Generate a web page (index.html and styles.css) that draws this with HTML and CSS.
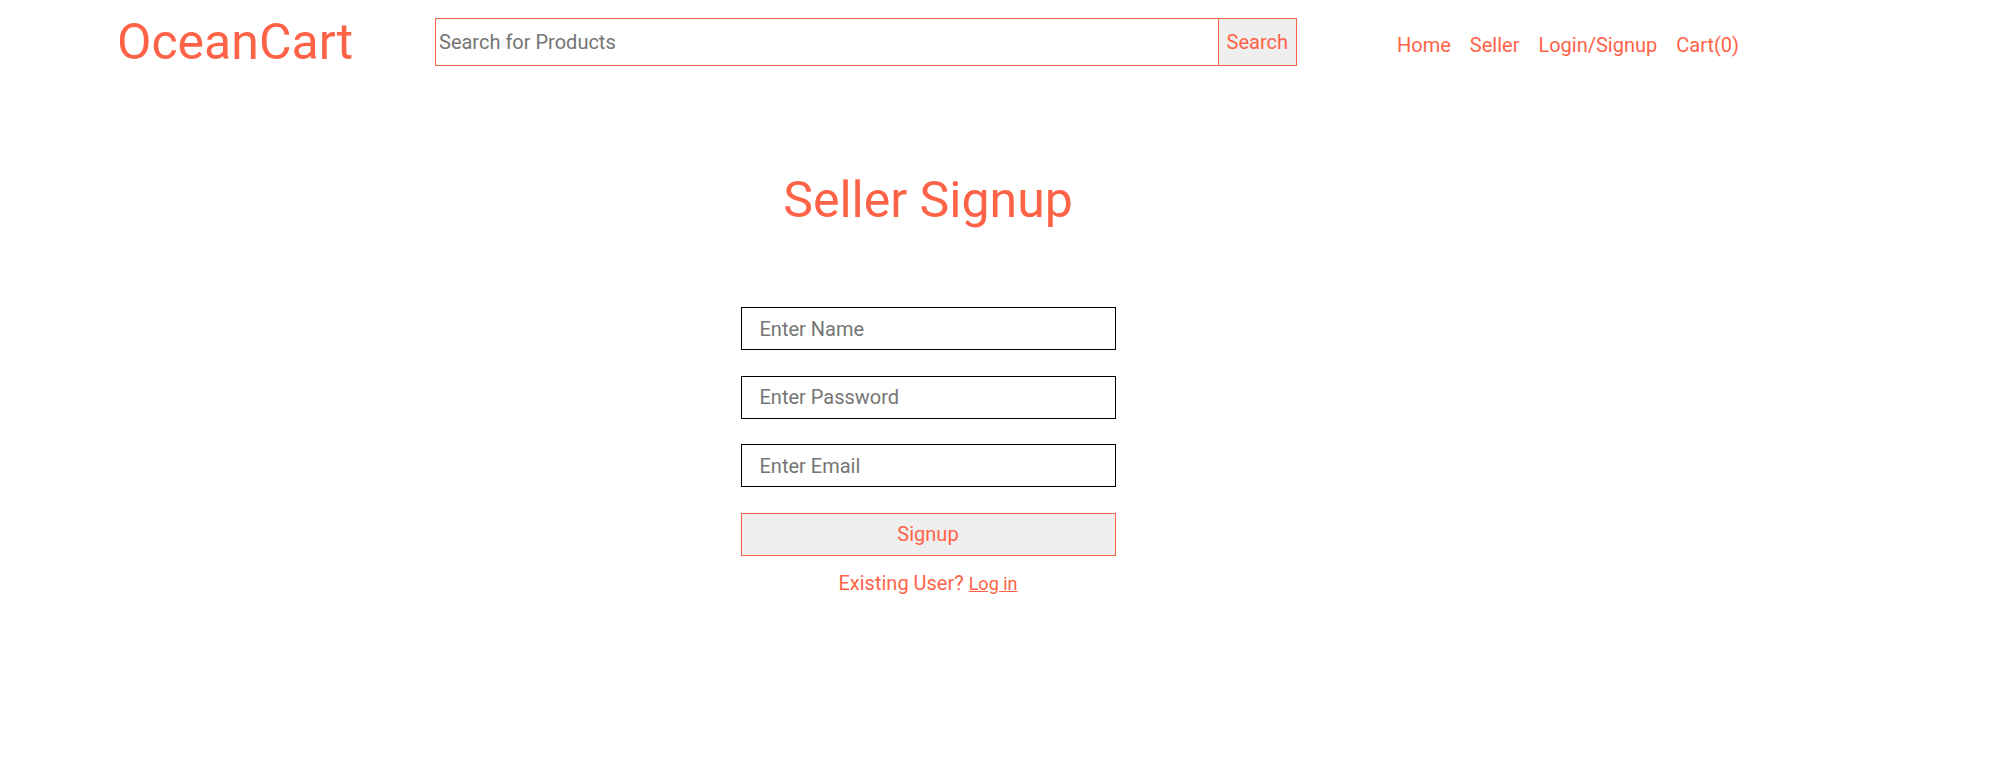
FILE: index.html
```html
<!DOCTYPE html>
<html lang="en">
<head>
<meta charset="utf-8">
<title>OceanCart - Seller Signup</title>
<link rel="stylesheet" href="styles.css">
</head>
<body>
<header class="header">
  <div class="logo">OceanCart</div>
  <form class="search">
    <input class="search-input" type="text" placeholder="Search for Products">
    <button class="search-btn" type="button">Search</button>
  </form>
  <nav class="nav">
    <a href="#">Home</a>
    <a href="#">Seller</a>
    <a href="#">Login/Signup</a>
    <a href="#">Cart(0)</a>
  </nav>
</header>
<main class="main">
  <h1 class="title">Seller Signup</h1>
  <form class="signup">
    <input class="field" type="text" placeholder="Enter Name">
    <input class="field" type="password" placeholder="Enter Password">
    <input class="field" type="email" placeholder="Enter Email">
    <button class="signup-btn" type="button">Signup</button>
    <p class="existing">Existing User? <a href="#" class="login-link">Log in</a></p>
  </form>
</main>
</body>
</html>
```
FILE: styles.css
```css
* { box-sizing: border-box; }
html, body { margin: 0; padding: 0; background: #fff; }
body {
  font-family: Roboto, "Noto Sans", "Liberation Sans", sans-serif;
  color: tomato;
}
.header {
  display: flex;
  align-items: flex-start;
  padding: 13px 0 0 117px;
  height: 80px;
}
.logo {
  font-size: 50px;
  line-height: 58px;
  color: tomato;
  width: 318px;
}
.search {
  display: flex;
  width: 862px;
  height: 48px;
  margin: 5px 0 0 0;
  border: 1px solid tomato;
}
.search-input {
  flex: 1;
  border: none;
  outline: none;
  padding: 0 3px;
  font-family: inherit;
  font-size: 20px;
  color: #333;
  background: #fff;
}
.search-input::placeholder { color: #757575; }
.search-btn {
  border: none;
  border-left: 1px solid tomato;
  background: #efefef;
  color: tomato;
  font-family: inherit;
  font-size: 20px;
  padding: 0 8px;
  cursor: pointer;
}
.nav {
  display: flex;
  gap: 19px;
  margin: 21px 0 0 100px;
}
.nav a {
  color: tomato;
  text-decoration: none;
  font-size: 20px;
  line-height: 23px;
}
.main {
  width: 1856px;
  display: flex;
  flex-direction: column;
  align-items: center;
}
.title {
  margin: 91px 0 0;
  font-weight: 400;
  font-size: 50px;
  line-height: 58px;
  color: tomato;
}
.signup {
  display: flex;
  flex-direction: column;
  align-items: center;
  gap: 25.67px;
  margin-top: 78px;
  width: 375px;
}
.field {
  width: 375px;
  height: 43px;
  border: 1px solid #000;
  padding: 0 18px;
  font-family: inherit;
  font-size: 20px;
  outline: none;
}
.field::placeholder { color: #757575; }
.signup-btn {
  width: 375px;
  height: 43px;
  border: 1px solid tomato;
  background: #efefef;
  color: tomato;
  font-family: inherit;
  font-size: 20px;
  cursor: pointer;
}
.existing {
  margin: -10px 0 0;
  font-size: 20px;
  line-height: 23px;
  color: tomato;
}
.login-link {
  color: tomato;
  font-size: 18px;
  text-decoration: underline;
}
```
